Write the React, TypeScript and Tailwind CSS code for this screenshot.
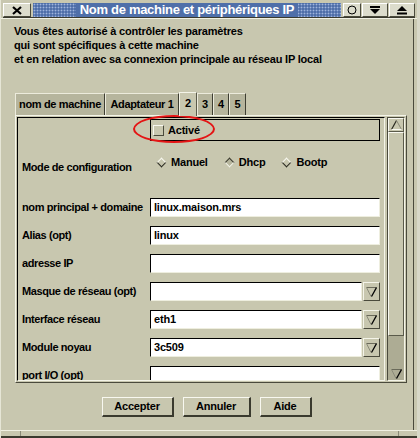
import React from "react";

function TitleButton({ w, children }: { w: string; children: React.ReactNode }) {
  return (
    <div
      className={`${w} h-full flex items-center justify-center bg-[#dcdccc] border border-t-white border-l-white border-b-[#4a4a3c] border-r-[#4a4a3c]`}
    >
      {children}
    </div>
  );
}

function Tab({ label, w, selected }: { label: string; w: string; selected?: boolean }) {
  if (selected) {
    return (
      <div
        className={`${w} h-[24px] -mb-px relative z-10 flex items-center justify-center bg-[#c8c7af] border-t border-l border-r border-t-[#f4f4e8] border-l-[#f4f4e8] border-r-[#5a5a4a] pb-[3px]`}
      >
        {label}
      </div>
    );
  }
  return (
    <div
      className={`${w} h-[22px] flex items-center justify-center tracking-[-0.35px] bg-[#b6b59d] border-t border-l border-r border-t-[#ecebdc] border-l-[#ecebdc] border-r-[#3e3e32]`}
    >
      {label}
    </div>
  );
}

function DropArrow() {
  return (
    <svg width="11" height="11" viewBox="0 0 11 11">
      <line x1="0.5" y1="1.5" x2="10.5" y2="1.5" stroke="#6a6a5a" strokeWidth="1" />
      <line x1="0.5" y1="1.5" x2="5" y2="10.5" stroke="#8a8a78" strokeWidth="1" />
      <line x1="10.5" y1="1.5" x2="5.5" y2="10.5" stroke="#000" strokeWidth="1.3" />
    </svg>
  );
}

function Field({ label, value, drop }: { label: string; value?: string; drop?: boolean }) {
  return (
    <div className="flex items-center h-[28px] shrink-0">
      <div className="w-[128px] tracking-[-0.4px]">{label}</div>
      {drop ? (
        <div className="w-[230px] h-[19px] flex gap-px">
          <div className="flex-1 bg-white border border-t-black border-l-black border-b-[#eeeedf] border-r-[#eeeedf] pl-[3px] leading-[17px]">
            {value}
          </div>
          <div className="w-[17px] flex items-center justify-center border border-t-[#f4f4e8] border-l-[#f4f4e8] border-b-[#4a4a3c] border-r-[#4a4a3c]">
            <DropArrow />
          </div>
        </div>
      ) : (
        <div className="w-[230px] h-[19px] bg-white border border-t-black border-l-black border-b-[#eeeedf] border-r-[#eeeedf] pl-[3px] leading-[17px]">
          {value}
        </div>
      )}
    </div>
  );
}

function Radio({ label, on }: { label: string; on?: boolean }) {
  return (
    <div className="flex items-center gap-[6px]">
      <div
        className={
          on
            ? "w-[7px] h-[7px] rotate-45 border border-t-[#3a3a2e] border-l-[#3a3a2e] border-b-[#f4f4e8] border-r-[#f4f4e8] bg-[#b6b59d]"
            : "w-[7px] h-[7px] rotate-45 border border-t-[#f8f8f0] border-l-[#f8f8f0] border-b-[#2a2a20] border-r-[#2a2a20]"
        }
      />
      <span>{label}</span>
    </div>
  );
}

function Btn({ w, label }: { w: string; label: string }) {
  return (
    <div
      className={`${w} h-[20px] flex items-center justify-center border border-b-2 border-r-2 border-t-[#f8f8f0] border-l-[#f8f8f0] border-b-[#3a3a2e] border-r-[#3a3a2e]`}
    >
      {label}
    </div>
  );
}

export default function App() {
  return (
    <div className="relative w-[420px] h-[438px] overflow-hidden flex flex-col bg-[#c8c7af] border-l border-l-[#e6e6d6] border-r-[3px] border-r-[#d8d8c8] font-['Liberation_Sans',Arial,sans-serif] font-bold text-[11px] tracking-[-0.2px] text-black">
      {/* title bar */}
      <div className="flex h-[14px] mt-[3px] ml-[2px] mr-[2px] gap-[2px] shrink-0">
        <TitleButton w="w-[28px]">
          <svg width="10" height="9" viewBox="0 0 10 9">
            <path d="M1 1 L9 8 M9 1 L1 8" stroke="#000" strokeWidth="2.2" />
          </svg>
        </TitleButton>
        <div className="flex-1 flex items-center justify-center bg-[#4f6fa9] bg-[radial-gradient(circle,#9fb4dc_0.8px,transparent_1.1px)] bg-[length:3px_3px]">
          <span className="bg-[#4f6fa9] px-[4px] text-white text-[13px] leading-[14px] tracking-[-0.3px]">
            Nom de machine et périphériques IP
          </span>
        </div>
        <div className="flex gap-px h-full">
          <TitleButton w="w-[18px]">
            <svg width="10" height="10" viewBox="0 0 10 10">
              <circle cx="5" cy="5" r="4" fill="none" stroke="#000" strokeWidth="1" />
            </svg>
          </TitleButton>
          <TitleButton w="w-[26px]">
            <svg width="12" height="9" viewBox="0 0 12 9">
              <rect x="1" y="0" width="10" height="2" fill="#000" />
              <path d="M1 3 L11 3 L6 8 Z" fill="#000" />
            </svg>
          </TitleButton>
          <TitleButton w="w-[26px]">
            <svg width="12" height="9" viewBox="0 0 12 9">
              <path d="M6 0 L11 5 L1 5 Z" fill="#000" />
              <rect x="1" y="6.5" width="10" height="2" fill="#000" />
            </svg>
          </TitleButton>
        </div>
      </div>
      <div className="h-px bg-[#3a3a2e] mx-[2px] shrink-0" />
      <div className="h-px bg-[#f0f0e2] shrink-0" />

      {/* body */}
      <div className="flex-1 flex flex-col mr-[3px] border-r border-r-[#4a4a3c]">
        <div className="pl-[13px] pt-[5px] leading-[14px]">
          <div>Vous êtes autorisé à contrôler les paramètres</div>
          <div>qui sont spécifiques à cette machine</div>
          <div>et en relation avec sa connexion principale au réseau IP local</div>
        </div>

        {/* tabs */}
        <div className="ml-[14px] mt-[25px] flex items-end h-[24px]">
          <Tab label="nom de machine" w="w-[90px]" />
          <Tab label="Adaptateur 1" w="w-[74px]" />
          <Tab label="2" w="w-[18px]" selected />
          <Tab label="3" w="w-[16px]" />
          <Tab label="4" w="w-[16px]" />
          <Tab label="5" w="w-[17px]" />
        </div>

        {/* panel */}
        <div className="ml-[14px] w-[392px] h-[268px] flex gap-[2px] p-px border border-t-[#f4f4e8] border-l-[#f4f4e8] border-b-[#4a4a3c] border-r-[#4a4a3c]">
          <div className="flex-1 overflow-hidden flex flex-col pl-[4px] border border-t-black border-l-black border-b-[#f4f4e8] border-r-[#f4f4e8]">
            <div className="flex h-[22px] mt-px shrink-0">
              <div className="w-[128px]" />
              <div className="w-[230px] flex items-center gap-[4px] pl-[2px] border border-black">
                <div className="w-[11px] h-[11px] border border-t-[#f8f8f0] border-l-[#f8f8f0] border-b-[#4a4a3c] border-r-[#4a4a3c]" />
                <span>Activé</span>
              </div>
            </div>
            <div className="flex items-center h-[52px] shrink-0">
              <div className="w-[128px] tracking-[-0.4px]">Mode de configuration</div>
              <div className="flex items-center gap-[18px] pl-[8px] mb-[10px]">
                <Radio label="Manuel" />
                <Radio label="Dhcp" on />
                <Radio label="Bootp" />
              </div>
            </div>
            <Field label="nom principal + domaine" value="linux.maison.mrs" />
            <Field label="Alias (opt)" value="linux" />
            <Field label="adresse IP" />
            <Field label="Masque de réseau (opt)" drop />
            <Field label="Interface réseau" value="eth1" drop />
            <Field label="Module noyau" value="3c509" drop />
            <Field label="port I/O (opt)" />
          </div>

          {/* scrollbar */}
          <div className="w-[18px] flex flex-col border border-t-[#4a4a3c] border-l-[#4a4a3c] border-b-[#f4f4e8] border-r-[#f4f4e8]">
            <div className="h-[14px] shrink-0 flex items-center justify-center border border-t-[#f8f8f0] border-l-[#f8f8f0] border-b-[#5a5a4a] border-r-[#5a5a4a]">
              <svg width="11" height="10" viewBox="0 0 11 10">
                <line x1="5.5" y1="0.5" x2="0.5" y2="9.5" stroke="#2a2a20" strokeWidth="1.2" />
                <line x1="5.5" y1="0.5" x2="10.5" y2="9.5" stroke="#8a8a78" strokeWidth="1" />
                <line x1="0.5" y1="9.5" x2="10.5" y2="9.5" stroke="#f8f8f0" strokeWidth="1" />
              </svg>
            </div>
            <div className="h-[204px] shrink-0 border border-t-[#f8f8f0] border-l-[#f8f8f0] border-b-[#5a5a4a] border-r-[#5a5a4a]" />
            <div className="flex-1 bg-[#adac94]" />
            <div className="h-[14px] shrink-0 flex items-center justify-center bg-[#adac94]">
              <DropArrow />
            </div>
          </div>
        </div>

        {/* buttons */}
        <div className="mt-[14px] flex justify-center gap-[9px] pr-px">
          <Btn w="w-[72px]" label="Accepter" />
          <Btn w="w-[68px]" label="Annuler" />
          <Btn w="w-[52px]" label="Aide" />
        </div>
      </div>

      {/* bottom frame */}
      <div className="h-[8px] shrink-0 flex border-t border-t-[#f0f0e2] border-b-2 border-b-[#3a3a2e]">
        <div className="w-[20px] border-r border-r-[#8a8a78]" />
        <div className="flex-1" />
        <div className="w-[19px] border-l border-l-[#8a8a78]" />
      </div>

      {/* red highlight */}
      <div className="absolute left-[132px] top-[115px] w-[82px] h-[28px] rounded-[50%] border-2 border-[#e41414]" />
    </div>
  );
}
